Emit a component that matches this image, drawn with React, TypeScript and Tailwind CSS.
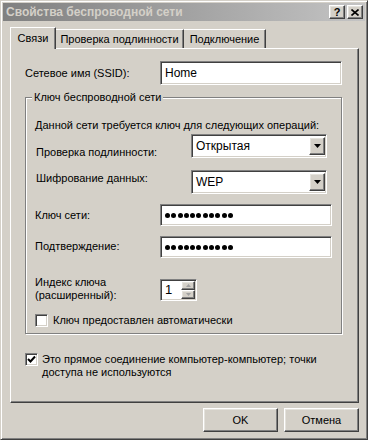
const raised =
  "border border-t-white border-l-white border-r-[#404040] border-b-[#404040] shadow-[inset_-1px_-1px_0_#808080,inset_1px_1px_0_#e4e2dc] bg-[#d4d0c8]";
const sunken =
  "border border-t-[#808080] border-l-[#808080] border-r-white border-b-white shadow-[inset_1px_1px_0_#404040,inset_-1px_-1px_0_#d4d0c8] bg-white";

function TextBox({ value, width, height }: { value: string; width: string; height: string }) {
  return (
    <div className={`${sunken} ${width} ${height} flex items-center pl-[4px]`}>
      <span className="text-[12px]">{value}</span>
    </div>
  );
}

function Dots() {
  return (
    <div className="flex gap-[1.3px] pl-[1px]">
      {Array.from({ length: 11 }).map((_, i) => (
        <span key={i} className="block h-[5px] w-[5px] rounded-full bg-black" />
      ))}
    </div>
  );
}

function Select({ value }: { value: string }) {
  return (
    <div className={`${sunken} flex h-[24px] w-[136px] items-center justify-between pl-[4px] pr-[1px]`}>
      <span className="text-[12px]">{value}</span>
      <div className={`${raised} flex h-[18px] w-[16px] items-center justify-center`}>
        <svg width="7" height="4" viewBox="0 0 7 4">
          <path d="M0 0h7L3.5 4z" fill="#000" />
        </svg>
      </div>
    </div>
  );
}

function Check({ checked }: { checked?: boolean }) {
  return (
    <div className={`${sunken} flex h-[13px] w-[13px] shrink-0 items-center justify-center`}>
      {checked && (
        <svg width="9" height="9" viewBox="0 0 9 9">
          <path d="M1 4l2.5 2.5L8 1.5" stroke="#000" strokeWidth="2" fill="none" />
        </svg>
      )}
    </div>
  );
}

export default function App() {
  return (
    <div className="h-[440px] w-[368px] overflow-hidden whitespace-nowrap bg-[#d4d0c8] font-['Liberation_Sans',Arial,sans-serif] text-[11px] leading-[14px] text-black">
      <div className="flex h-[440px] flex-col border border-t-[#d4d0c8] border-l-[#d4d0c8] border-r-[#404040] border-b-[#404040] p-[2px] shadow-[inset_1px_1px_0_white,inset_-1px_-1px_0_#808080]">
        {/* title bar */}
        <div className="flex h-[18px] items-center justify-between bg-gradient-to-r from-[#808080] to-[#c4c4c4] pl-[3px] pr-[2px]">
          <span className="text-[12px] font-bold text-[#d4d0c8]">Свойства беспроводной сети</span>
          <div className="flex gap-[2px]">
            <div className={`${raised} flex h-[14px] w-[16px] items-center justify-center text-[11px] font-bold leading-none`}>?</div>
            <div className={`${raised} flex h-[14px] w-[16px] items-center justify-center`}>
              <svg width="8" height="7" viewBox="0 0 8 7">
                <path d="M0.5 0.5l7 6M7.5 0.5l-7 6" stroke="#000" strokeWidth="1.6" />
              </svg>
            </div>
          </div>
        </div>

        {/* tabs */}
        <div className="relative z-10 ml-[7px] mt-[6px] flex items-end">
          <div className="-mb-px flex h-[22px] w-[46px] items-center justify-center border-l border-t border-r border-l-white border-t-white border-r-[#404040] bg-[#d4d0c8] pb-[2px] shadow-[inset_-1px_0_0_#808080]">
            Связи
          </div>
          <div className="flex h-[19px] w-[128px] items-center justify-center border-t border-r border-t-white border-r-[#404040] shadow-[inset_-1px_0_0_#808080]">
            Проверка подлинности
          </div>
          <div className="flex h-[19px] w-[82px] items-center justify-center border-t border-r border-t-white border-r-[#404040] shadow-[inset_-1px_0_0_#808080]">
            Подключение
          </div>
        </div>

        {/* tab panel */}
        <div className="ml-[7px] flex h-[355px] w-[349px] flex-col border border-t-white border-l-white border-r-[#404040] border-b-[#404040] pl-[14px] pt-[12px] shadow-[inset_-1px_-1px_0_#808080]">
          <div className="flex h-[24px] items-center">
            <span className="w-[135px]">Сетевое имя (SSID):</span>
            <TextBox value="Home" width="w-[182px]" height="h-[24px]" />
          </div>

          {/* group box */}
          <div className="relative mt-[12px] h-[237px] w-[317px] border border-[#808080] pl-[9px] pt-[20px] shadow-[1px_1px_0_white,inset_1px_1px_0_white]">
            <span className="absolute left-[6px] top-[-8px] bg-[#d4d0c8] px-[2px]">Ключ беспроводной сети</span>
            <div>Данной сети требуется ключ для следующих операций:</div>

            <div className="mt-[2px] flex items-start">
              <span className="w-[156px] pt-[11px] pl-[1px]">Проверка подлинности:</span>
              <Select value="Открытая" />
            </div>
            <div className="mt-[11px] flex items-start">
              <span className="w-[156px] pt-[1px] pl-[1px]">Шифрование данных:</span>
              <Select value="WEP" />
            </div>

            <div className="mt-[10px] flex items-start">
              <span className="w-[125px] pt-[4px]">Ключ сети:</span>
              <div className={`${sunken} flex h-[22px] w-[172px] items-center pl-[3px]`}>
                <Dots />
              </div>
            </div>
            <div className="mt-[10px] flex items-start">
              <span className="w-[125px] pt-[3px]">Подтверждение:</span>
              <div className={`${sunken} flex h-[22px] w-[172px] items-center pl-[3px]`}>
                <Dots />
              </div>
            </div>

            <div className="mt-[18px] flex items-start">
              <span className="w-[125px] leading-[13px]">
                Индекс ключа
                <br />
                (расширенный):
              </span>
              <div className={`${sunken} mt-[3px] flex h-[22px] w-[37px] items-center justify-between pl-[4px] pr-[1px]`}>
                <span className="text-[13px]">1</span>
                <div className="flex flex-col">
                  <div className={`${raised} flex h-[9px] w-[14px] items-center justify-center`}>
                    <svg width="5" height="3" viewBox="0 0 5 3">
                      <path d="M2.5 0L5 3H0z" fill="#a0a0a0" />
                    </svg>
                  </div>
                  <div className={`${raised} flex h-[9px] w-[14px] items-center justify-center`}>
                    <svg width="5" height="3" viewBox="0 0 5 3">
                      <path d="M0 0h5L2.5 3z" fill="#a0a0a0" />
                    </svg>
                  </div>
                </div>
              </div>
            </div>

            <div className="mt-[11px] flex items-center gap-[5px]">
              <Check />
              <span>Ключ предоставлен автоматически</span>
            </div>
          </div>

          <div className="mt-[19px] flex items-start gap-[4px]">
            <Check checked />
            <span className="leading-[13px]">
              Это прямое соединение компьютер-компьютер; точки
              <br />
              доступа не используются
            </span>
          </div>
        </div>

        {/* buttons */}
        <div className="mr-[6px] mt-[5px] flex justify-end gap-[6px]">
          <button className={`${raised} h-[24px] w-[75px]`}>OK</button>
          <button className={`${raised} h-[24px] w-[75px]`}>Отмена</button>
        </div>
      </div>
    </div>
  );
}
